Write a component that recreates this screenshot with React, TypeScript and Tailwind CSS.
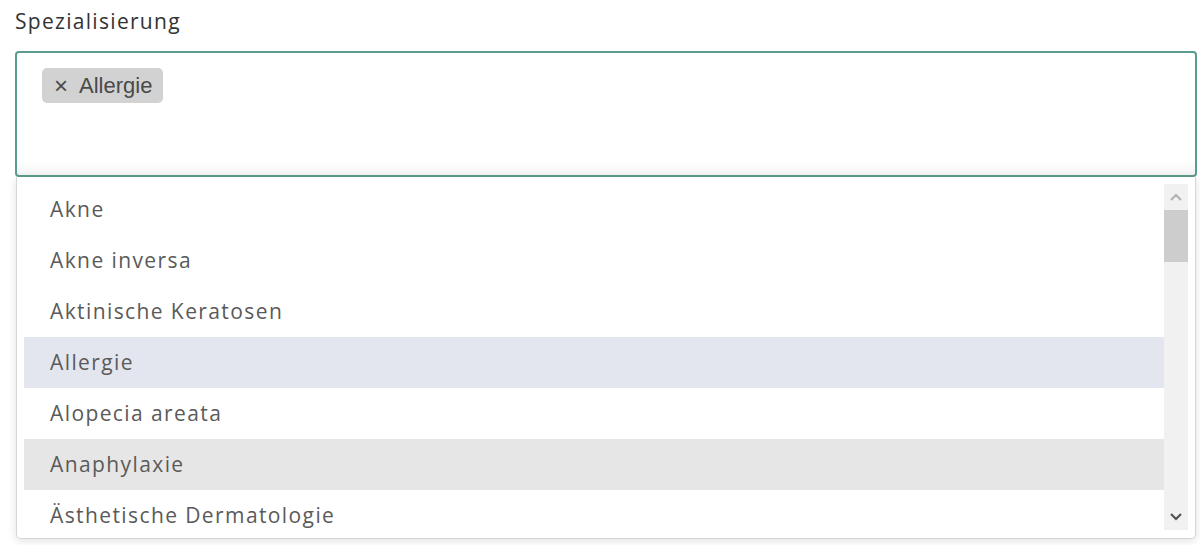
import React from 'react';

const options = [
  'Akne',
  'Akne inversa',
  'Aktinische Keratosen',
  'Allergie',
  'Alopecia areata',
  'Anaphylaxie',
  'Ästhetische Dermatologie',
];

export default function App(): React.ReactElement {
  return (
    <div className="w-[1200px] h-[545px] overflow-hidden bg-white pl-[15px] pr-[3px] pt-[7px] font-['Open_Sans',sans-serif]">
      {/* Label */}
      <div className="h-[28px] mb-[16px] text-[21px] leading-[28px] text-[#333] tracking-[1.3px]">
        Spezialisierung
      </div>

      {/* Selected values box */}
      <div className="h-[126px] rounded-[4px] border-2 border-[#5a9c8d] px-[25px] pt-[15px] shadow-[inset_0_-14px_14px_-10px_rgba(0,0,0,0.07)]">
        <span className="inline-flex items-center h-[35px] pl-[12px] pr-[11px] rounded-[5px] bg-[#d2d2d2] text-[22px] text-[#4a4a4a] font-['Liberation_Sans',Arial,sans-serif]">
          <span className="mr-[11px] text-[24px] leading-none">×</span>
          Allergie
        </span>
      </div>

      {/* Dropdown list */}
      <div className="mx-[1px] h-[362px] overflow-hidden rounded-b-[5px] border border-t-0 border-[#d6d6d6] bg-white shadow-[0_2px_8px_rgba(0,0,0,0.12)] flex pt-[7px] pl-[7px] pr-[7px] pb-[8px]">
        <ul className="flex-1 overflow-hidden">
          {options.map((opt) => (
            <li
              key={opt}
              className={
                'h-[51px] flex items-center pl-[26px] text-[21px] text-[#5a5a5a] tracking-[1.4px] ' +
                (opt === 'Allergie'
                  ? 'bg-[#e3e6ee]'
                  : opt === 'Anaphylaxie'
                  ? 'bg-[#e6e6e6]'
                  : '')
              }
            >
              {opt}
            </li>
          ))}
        </ul>

        {/* Scrollbar */}
        <div className="w-[24px] bg-[#f1f1f1] flex flex-col">
          <div className="h-[26px] flex items-center justify-center">
            <svg width="12" height="8" viewBox="0 0 12 8">
              <path d="M1 7 L6 2 L11 7" fill="none" stroke="#b0b0b0" strokeWidth="2" />
            </svg>
          </div>
          <div className="h-[52px] bg-[#cdcdcd]" />
          <div className="flex-1" />
          <div className="h-[26px] flex items-center justify-center">
            <svg width="12" height="8" viewBox="0 0 12 8">
              <path d="M1 1 L6 6 L11 1" fill="none" stroke="#505050" strokeWidth="2" />
            </svg>
          </div>
        </div>
      </div>
    </div>
  );
}
